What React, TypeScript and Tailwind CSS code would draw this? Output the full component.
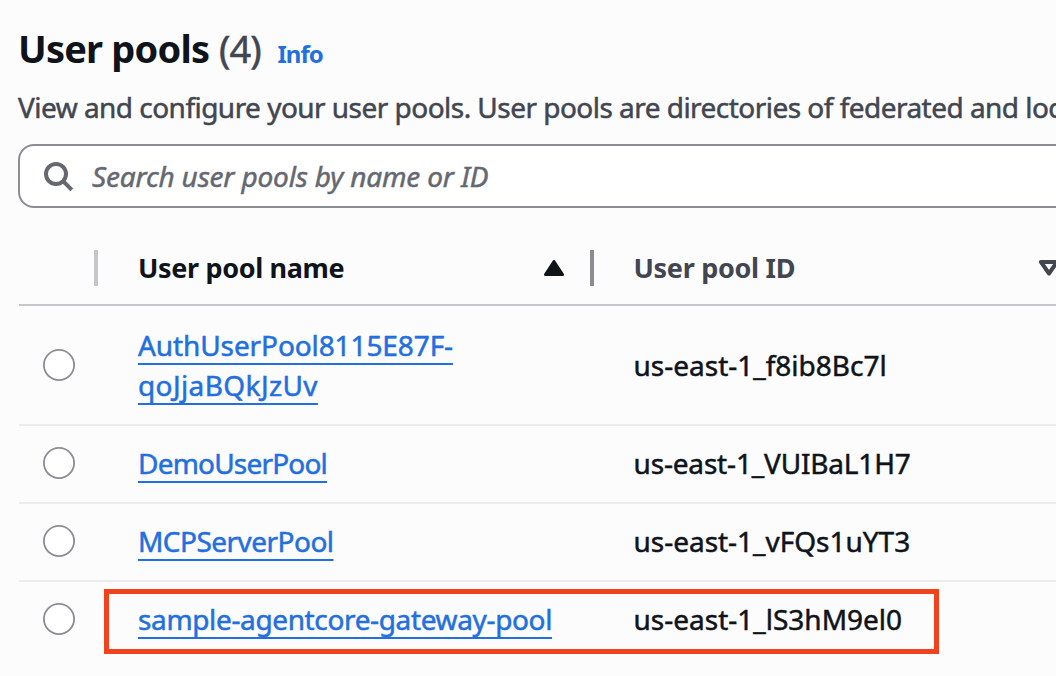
type Pool = {
  lines: { text: string; tracking: string }[];
  id: string;
  idTracking: string;
  row: string;
  radio: string;
  idPad: string;
};

const pools: Pool[] = [
  {
    lines: [
      { text: "AuthUserPool8115E87F-", tracking: "tracking-[-0.1px]" },
      { text: "qoJjaBQkJzUv", tracking: "tracking-[0.39px]" },
    ],
    id: "us-east-1_f8ib8Bc7l",
    idTracking: "tracking-[0px]",
    row: "h-[120px] pt-[19px]",
    radio: "mt-[24px]",
    idPad: "pt-[20px]",
  },
  {
    lines: [{ text: "DemoUserPool", tracking: "tracking-[-0.8px]" }],
    id: "us-east-1_VUIBaL1H7",
    idTracking: "tracking-[-0.17px]",
    row: "h-[78px] pt-[17px]",
    radio: "mt-[4px]",
    idPad: "pt-0",
  },
  {
    lines: [{ text: "MCPServerPool", tracking: "tracking-[-0.53px]" }],
    id: "us-east-1_vFQs1uYT3",
    idTracking: "tracking-[-0.02px]",
    row: "h-[78px] pt-[17px]",
    radio: "mt-[4px]",
    idPad: "pt-0",
  },
  {
    lines: [{ text: "sample-agentcore-gateway-pool", tracking: "tracking-[-0.36px]" }],
    id: "us-east-1_lS3hM9el0",
    idTracking: "tracking-[0px]",
    row: "h-[94px] pt-[17px]",
    radio: "mt-[4px]",
    idPad: "pt-0",
  },
];

function PoolRow({ pool, last }: { pool: Pool; last: boolean }) {
  return (
    <div
      className={`relative flex items-start text-[28px] leading-[40px] ${pool.row} ${
        last ? "" : "border-b-2 border-[#ebebf0]"
      }`}
    >
      <div className="w-[119px] shrink-0 pl-[24px]">
        <div className={`size-[32px] rounded-full bg-white shadow-[inset_0_0_0_1.8px_#8c8c94] ${pool.radio}`} />
      </div>
      <div className="w-[495px] shrink-0 text-[#226fe0] [-webkit-text-stroke:0.5px]">
        {pool.lines.map((l) => (
          <div key={l.text}>
            <a
              className={`whitespace-nowrap underline decoration-2 underline-offset-[7px] [text-decoration-skip-ink:none] ${l.tracking}`}
            >
              {l.text}
            </a>
          </div>
        ))}
      </div>
      <div
        className={`whitespace-nowrap text-[#0f141a] [-webkit-text-stroke:0.5px] pl-[0.5px] ${pool.idPad} ${pool.idTracking}`}
      >
        {pool.id}
      </div>
      {last && (
        <div className="absolute top-[7px] left-[84.5px] h-[65px] w-[835px] border-[5px] border-[#f0431d]" />
      )}
    </div>
  );
}

export default function App() {
  return (
    <div className="h-[676px] w-[1056px] overflow-hidden bg-[#fcfcfd] font-['Noto_Sans',sans-serif]">
      <header className="flex h-[87px] items-baseline pt-[21px] pl-[18px] leading-[54px] whitespace-nowrap">
        <h1 className="w-[201px] text-[38px] font-bold tracking-[-0.8px] text-[#0f141a]">User pools</h1>
        <span className="w-[58.5px] text-[38px] tracking-[-1px] text-[#424650] [-webkit-text-stroke:0.5px]">(4)</span>
        <a className="text-[24px] font-bold tracking-[-1px] text-[#226fe0]">Info</a>
      </header>
      <p className="h-[57px] pl-[18px] text-[28px] leading-[40px] tracking-[-0.53px] whitespace-nowrap text-[#424650] [-webkit-text-stroke:0.5px]">
        View and configure your user pools. User pools are directories of federated and loc
      </p>
      <div className="ml-[18px] flex h-[64px] w-[1100px] items-start rounded-[16px] border-2 border-[#8c8c94] bg-white">
        <svg className="mt-[14px] ml-[22px] size-[32px] shrink-0" viewBox="0 0 32 32" fill="none" stroke="#656871" strokeWidth="4">
          <circle cx="14" cy="14" r="10" />
          <path d="M21 21 L29.8 29.8" />
        </svg>
        <span className="mt-[10px] ml-[18px] text-[28px] leading-[40px] tracking-[-0.17px] whitespace-nowrap text-[#656871] italic [-webkit-text-stroke:0.5px]">
          Search user pools by name or ID
        </span>
      </div>
      <div className="ml-[19px] w-[1100px]">
        <div className="flex h-[98px] items-start border-b-2 border-[#c6c6cd] pt-[42px] text-[27px] leading-[36px] font-bold whitespace-nowrap">
          <div className="h-[36px] w-[79px] shrink-0 border-r-4 border-[#c6c6cd]" />
          <div className="flex h-[36px] w-[496px] shrink-0 border-r-4 border-[#8c8c94] pl-[40px] text-[#0f141a]">
            <span className="w-[406px] tracking-[-0.35px]">User pool name</span>
            <svg className="mt-[10px] h-[16px] w-[20px]" viewBox="0 0 20 16">
              <path d="M10 1.5 L18.5 14.5 H1.5 Z" fill="#0f141a" stroke="#0f141a" strokeWidth="3" strokeLinejoin="round" />
            </svg>
          </div>
          <div className="flex pl-[39.5px] text-[#424650]">
            <span className="w-[405px] tracking-[-0.3px]">User pool ID</span>
            <svg className="mt-[10px] h-[16px] w-[20px]" viewBox="0 0 20 16">
              <path d="M2 2 H18 L10 13.5 Z" fill="none" stroke="#424650" strokeWidth="4" strokeLinejoin="round" />
            </svg>
          </div>
        </div>
        {pools.map((p, i) => (
          <PoolRow key={p.id} pool={p} last={i === pools.length - 1} />
        ))}
      </div>
    </div>
  );
}
